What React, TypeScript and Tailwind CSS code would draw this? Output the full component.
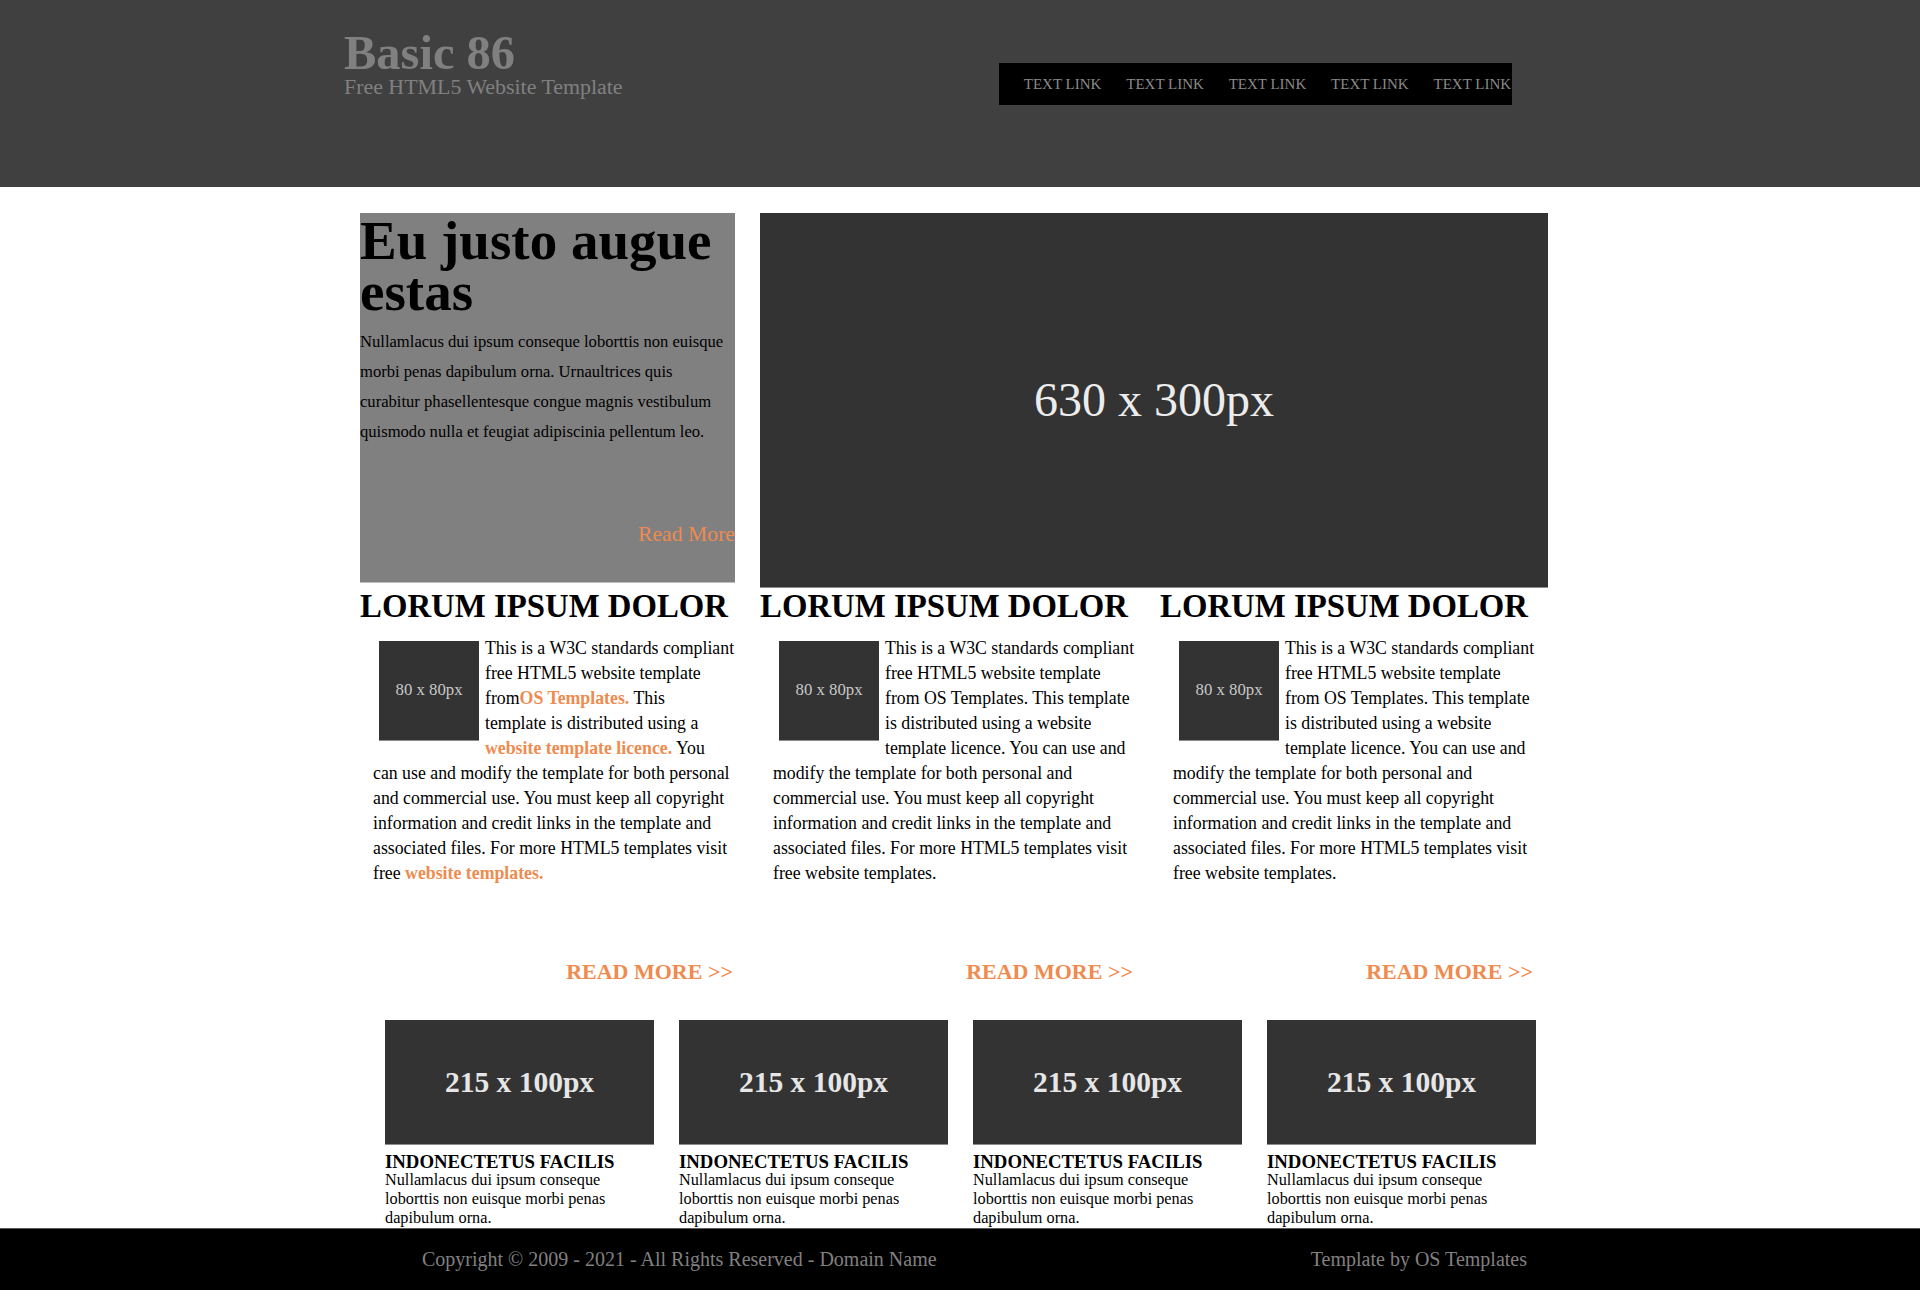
import React from "react";

const ORANGE = "text-[#ef8b4f]";

function Thumb() {
  return (
    <div className="float-left mx-[6px] mt-[5.5px] mb-[6px] flex h-[100px] w-[100px] items-center justify-center border-b border-[#8c8c8c] bg-[#333333] text-[16.75px] leading-none text-[#c8c8c8]">
      80 x 80px
    </div>
  );
}

function Column({ first }: { first: boolean }) {
  return (
    <article className="w-[400px]">
      <h2 className="text-[32.8px] font-bold leading-[36px] whitespace-nowrap">LORUM IPSUM DOLOR</h2>
      <div className="mt-[11.5px] flow-root px-[13px] text-[17.8px] leading-[25px]">
        <Thumb />
        {first ? (
          <p>
            This is a W3C standards compliant
            <br />
            free HTML5 website template
            <br />
            from<a className={`font-bold ${ORANGE}`}>OS Templates.</a> This
            <br />
            template is distributed using a
            <br />
            <a className={`font-bold ${ORANGE}`}>website template licence.</a> You
            <br />
            can use and modify the template for both personal
            <br />
            and commercial use. You must keep all copyright
            <br />
            information and credit links in the template and
            <br />
            associated files. For more HTML5 templates visit
            <br />
            free <a className={`font-bold ${ORANGE}`}>website templates.</a>
          </p>
        ) : (
          <p>
            This is a W3C standards compliant
            <br />
            free HTML5 website template
            <br />
            from OS Templates. This template
            <br />
            is distributed using a website
            <br />
            template licence. You can use and
            <br />
            modify the template for both personal and
            <br />
            commercial use. You must keep all copyright
            <br />
            information and credit links in the template and
            <br />
            associated files. For more HTML5 templates visit
            <br />
            free website templates.
          </p>
        )}
      </div>
      <p className={`mt-[73px] pr-[27px] text-right text-[22px] font-bold leading-[26px] ${ORANGE}`}>
        READ MORE &gt;&gt;
      </p>
    </article>
  );
}

function Card() {
  return (
    <div className="w-[269px]">
      <div className="flex h-[125px] items-center justify-center border-b border-[#8c8c8c] bg-[#333333] text-[29.5px] font-bold text-[#e6e6e6]">
        215 x 100px
      </div>
      <h3 className="mt-[7.5px] text-[18.75px] font-bold leading-[19px] whitespace-nowrap">INDONECTETUS FACILIS</h3>
      <p className="text-[16.25px] leading-[19px]">
        Nullamlacus dui ipsum conseque loborttis non euisque morbi penas dapibulum orna.
      </p>
    </div>
  );
}

export default function App() {
  return (
    <div className="flex min-h-[1291px] w-full flex-col bg-white font-['Liberation_Serif','Times_New_Roman',serif] text-black">
      <header className="h-[187px] shrink-0 bg-[#404040]">
        <div className="mx-auto flex w-[1232px] items-start">
          <div className="w-[655px] pt-[31px] text-[#808080]">
            <h1 className="text-[48.5px] font-bold leading-[44px]">Basic 86</h1>
            <p className="text-[21.9px] leading-[24px]">Free HTML5 Website Template</p>
          </div>
          <nav className="mt-[63px] flex h-[42px] w-[513px] items-center gap-[24.8px] overflow-hidden whitespace-nowrap bg-black pl-[24.8px] text-[15px] text-[#8a8a8a]">
            <a>TEXT LINK</a>
            <a>TEXT LINK</a>
            <a>TEXT LINK</a>
            <a>TEXT LINK</a>
            <a>TEXT LINK</a>
          </nav>
        </div>
      </header>

      <main className="mx-auto w-[1200px] pt-[26px]">
        <div className="flex gap-[25px]">
          <section className="flex h-[370px] w-[375px] flex-col border-b border-[#bdbdbd] bg-[#808080]">
            <h2 className="mt-[2px] text-[55px] font-bold leading-[51px]">Eu justo augue estas</h2>
            <p className="mt-[10px] text-[16.6px] leading-[30px]">
              Nullamlacus dui ipsum conseque loborttis non euisque morbi penas dapibulum orna. Urnaultrices quis
              curabitur phasellentesque congue magnis vestibulum quismodo nulla et feugiat adipiscinia pellentum leo.
            </p>
            <a className={`mt-auto mb-[35px] text-right text-[21.7px] leading-[26px] ${ORANGE}`}>Read More</a>
          </section>
          <div className="flex h-[375px] w-[788px] items-center justify-center border-b border-[#8c8c8c] bg-[#333333]">
            <span className="text-[48px] text-[#ececec]">630 x 300px</span>
          </div>
        </div>

        <div className="flex">
          <Column first={true} />
          <Column first={false} />
          <Column first={false} />
        </div>

        <div className="mt-[35.4px] flex gap-[25px] pl-[25px]">
          <Card />
          <Card />
          <Card />
          <Card />
        </div>
      </main>

      <footer className="h-[62px] shrink-0 border-t border-[#5a5a5a] bg-black">
        <div className="mx-auto flex h-full w-[1200px] items-center justify-between pb-[2px] pl-[62px] pr-[33px] text-[20px] text-[#808080]">
          <p>Copyright © 2009 - 2021 - All Rights Reserved - Domain Name</p>
          <p>Template by OS Templates</p>
        </div>
      </footer>
    </div>
  );
}
